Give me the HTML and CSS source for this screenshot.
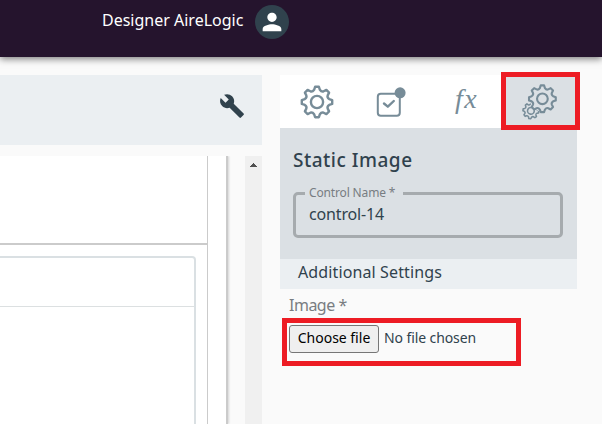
FILE: index.html
```html
<!DOCTYPE html>
<html lang="en">
<head>
<meta charset="utf-8">
<title>Designer</title>
<link rel="stylesheet" href="styles.css">
</head>
<body>
<svg class="defs" width="0" height="0">
  <defs>
    <path id="gear" d="M-1.900-15.200H1.900L2.900-12.200Q4.500-9.900 6.600-10.700L9.400-12.090 12.090-9.400 10.700-6.600Q9.900-4.500 12.200-2.900L15.200-1.900V1.900L12.200 2.900Q9.900 4.500 10.700 6.600L12.090 9.400 9.400 12.090 6.600 10.700Q4.500 9.900 2.900 12.200L1.900 15.200H-1.900L-2.900 12.200Q-4.500 9.900-6.600 10.700L-9.400 12.090-12.090 9.400-10.700 6.600Q-9.900 4.500-12.200 2.900L-15.200 1.900V-1.900L-12.200-2.900Q-9.900-4.500-10.700-6.600L-12.090-9.400-9.400-12.090-6.600-10.700Q-4.500-9.900-2.900-12.200Z"/>
  </defs>
</svg>
<header class="topbar">
  <span class="user">Designer AireLogic</span>
  <span class="avatar"><svg width="28" height="28" viewBox="0 0 24 24"><path fill="#fff" d="M12 12c2.200 0 4-1.800 4-4s-1.800-4-4-4-4 1.800-4 4 1.800 4 4 4zm0 2c-2.700 0-8 1.300-8 4v2h16v-2c0-2.700-5.300-4-8-4z"/></svg></span>
</header>
<main class="workspace">
  <section class="editor">
    <div class="toolbar">
      <svg width="26" height="26" viewBox="0 0 24 24"><path fill="#30424d" d="M22.700 19l-9.100-9.100c.9-2.300.4-5-1.500-6.900-2-2-5-2.400-7.400-1.300L9 6 6 9 1.600 4.700C.4 7.100.9 10.100 2.900 12.100c1.900 1.900 4.600 2.400 6.900 1.500l9.100 9.100c.4.400 1 .4 1.400 0l2.300-2.300c.5-.4.5-1.100.1-1.400z"/></svg>
    </div>
    <div class="canvas">
      <div class="paper">
        <div class="sheet">
          <div class="block"></div>
          <div class="card"><div class="card-head"></div></div>
        </div>
      </div>
      <div class="scrollbar"><svg width="7" height="4" viewBox="0 0 7 4"><path fill="#505050" d="M3 0H4V1H5V2H6V3H7V4H0V3H1V2H2V1H3Z"/></svg></div>
    </div>
  </section>
  <aside class="panel">
    <nav class="tabs">
      <span class="tab"><svg width="36" height="36" viewBox="-18 -18 36 36" class="line"><use href="#gear"/><circle r="6.100"/></svg></span>
      <span class="tab"><svg width="32" height="32" viewBox="0 0 32 32" class="line"><rect x="2.800" y="7.700" width="22" height="22" rx="3" stroke-width="2"/><path d="M9 17.500L12.800 20.700 18.800 15"/><circle class="dot" cx="25.100" cy="6.800" r="5.500"/></svg></span>
      <span class="tab fx">fx</span>
      <span class="tab active"><svg width="40" height="40" viewBox="0 0 40 40" class="line"><g transform="translate(10.900 28.800) rotate(8) scale(.52)"><use href="#gear" stroke-width="3"/><circle r="6.500" stroke-width="3"/></g><g transform="translate(22.400 16.800) scale(.88)"><circle class="mask" r="12.500"/><use href="#gear" class="solid"/><circle r="6.100"/></g></svg></span>
    </nav>
    <div class="props">
      <h2>Static Image</h2>
      <fieldset><legend>Control Name *</legend><div class="value">control-14</div></fieldset>
    </div>
    <div class="section">Additional Settings</div>
    <div class="label">Image *</div>
    <div class="file"><button type="button">Choose file</button><span>No file chosen</span></div>
  </aside>
</main>
<div class="mark mark-tab"></div>
<div class="mark mark-file"></div>
</body>
</html>
```
FILE: styles.css
```css
* { box-sizing: border-box; }
body { margin: 0; width: 602px; height: 424px; overflow: hidden; background: #fafafa; color: #30424d; font-family: "Noto Sans", sans-serif; }
svg { display: block; }
.defs { position: absolute; }
.topbar { height: 57px; padding: 4px 0 0 102px; display: flex; align-items: flex-start; background: #25142d; box-shadow: 0 2px 7px rgba(0,0,0,.5); }
.user { width: 153px; color: #fff; font-size: 16px; line-height: 32px; white-space: nowrap; }
.avatar { width: 34px; height: 34px; margin-top: 1px; border-radius: 50%; background: #30424d; display: grid; place-items: center; }
.workspace { display: flex; gap: 18px; padding-top: 18px; height: 367px; }
.editor { width: 262px; display: flex; flex-direction: column; gap: 11px; }
.toolbar { height: 70px; background: #ebeff2; display: flex; align-items: center; justify-content: flex-end; padding: 0 17px 8px 0; }
.canvas { height: 268px; display: flex; justify-content: space-between; overflow: hidden; }
.paper { width: 228px; background: #fff; border-right: 2px solid #cbcbcb; box-shadow: 1px 0 2px rgba(0,0,0,.15); }
.sheet { width: 208px; height: 268px; border-right: 1px solid #cbcbcb; overflow: hidden; }
.block { height: 89px; border-bottom: 2px solid #cbcbcb; }
.card { height: 190px; width: 196px; margin-top: 11px; border: 2px solid #dae0e3; border-left: 0; border-radius: 0 4px 0 0; }
.card-head { height: 49px; border-bottom: 1px solid #dce0e1; }
.scrollbar { width: 17px; background: #f0f0f0; padding: 7px 0 0 5px; }
.panel { width: 297px; }
.tabs { height: 53px; background: #fff; display: grid; grid-template-columns: repeat(4, 1fr); }
.tab { display: flex; align-items: center; justify-content: center; }
.active { background: #dbe0e4; }
.line { fill: none; stroke: #778c98; stroke-width: 2.400; stroke-linejoin: round; stroke-linecap: round; }
.dot { fill: #778c98; stroke: none; }
.mask { fill: #dbe0e4; stroke: #dbe0e4; stroke-width: 4; }
.solid { fill: #dbe0e4; }
.fx { padding: 0 0 5px 2px; color: #778c98; font: italic 28px/40px "Liberation Serif", serif; letter-spacing: 1.500px; }
.props { height: 131px; background: #dbe0e4; padding: 18px 14px 0 13px; }
h2 { margin: 0; font-size: 19px; line-height: 28px; font-weight: 500; letter-spacing: .5px; }
fieldset { height: 52px; margin: 12px 0 0; padding: 0 13px; border: 3px solid #a6abae; border-radius: 5px; min-width: 0; }
legend { margin-left: -4px; padding: 0 8px 0 4px; font-size: 12px; line-height: 14px; letter-spacing: -.150px; color: #777d82; }
.value { padding-top: 3px; font-size: 16px; line-height: 22px; letter-spacing: -.150px; }
.section { height: 30px; padding-left: 18px; background: #ebeff2; font-size: 16px; line-height: 27px; letter-spacing: .120px; }
.label { height: 36px; padding-left: 9px; color: #797d81; font-size: 16px; line-height: 33px; letter-spacing: -.500px; }
.file { display: flex; align-items: center; gap: 5px; padding-left: 9px; font-size: 14px; line-height: 24px; }
button { width: 90px; height: 28px; padding: 0 0 2px; border: 1px solid #767676; border-radius: 3px; background: #efefef; color: #000; font: inherit; white-space: nowrap; }
.file span { padding-bottom: 2px; letter-spacing: -.100px; }
.mark { position: absolute; border: 5px solid #ed1c24; }
.mark-tab { left: 501px; top: 72px; width: 79px; height: 58px; }
.mark-file { left: 282px; top: 318px; width: 239px; height: 48px; }
```
